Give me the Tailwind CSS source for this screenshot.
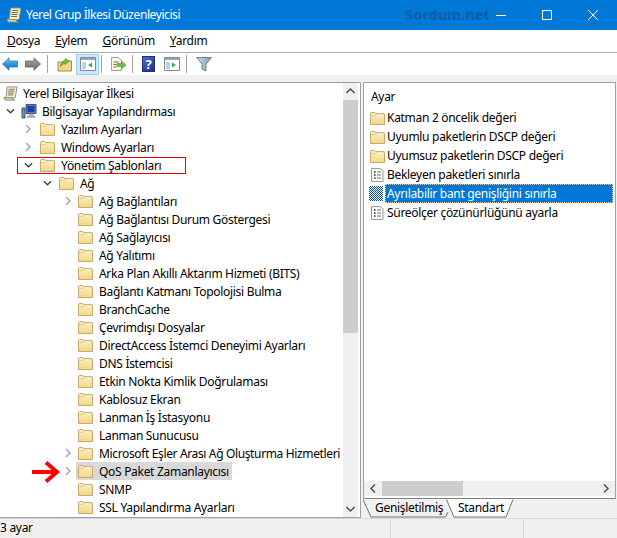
<!DOCTYPE html>
<html lang="tr">
  <head>
    <meta charset="UTF-8" />
    <title>Yerel Grup İlkesi Düzenleyicisi</title>
    <script src="https://cdn.jsdelivr.net/npm/@tailwindcss/browser@4"></script>
  </head>
  <body class="relative w-[617px] h-[538px] overflow-hidden bg-[#f0f0f0] text-[12px] leading-[18px] tracking-[-.3px] text-black font-['Noto_Sans','Open_Sans',sans-serif]">
    <svg class="absolute w-0 h-0">
      <defs>
        <linearGradient id="folder-fill" x1="0" y1="0" x2="0" y2="1">
          <stop offset="0" stop-color="#fcefc4" />
          <stop offset="1" stop-color="#f3d68a" />
        </linearGradient>
        <linearGradient id="arrow-blue" x1="0" y1="0" x2="0" y2="1">
          <stop offset="0" stop-color="#8fd0f5" />
          <stop offset=".5" stop-color="#2f95de" />
          <stop offset="1" stop-color="#1f6fb8" />
        </linearGradient>
        <linearGradient id="arrow-gray" x1="0" y1="0" x2="0" y2="1">
          <stop offset="0" stop-color="#a8a8a8" />
          <stop offset="1" stop-color="#666" />
        </linearGradient>
        <linearGradient id="funnel-fill" x1="0" y1="0" x2="1" y2="0">
          <stop offset="0" stop-color="#d3dfe6" />
          <stop offset="1" stop-color="#7f98a8" />
        </linearGradient>
      </defs>
      <symbol id="folder" viewBox="0 0 16 16">
        <path d="M1.500 14.500V3.500q0-1 1-1h3l1.500 1h7.500q1 0 1 1v10z" fill="url(#folder-fill)" stroke="#c9a966" />
        <path d="M2 5.500h5l1.500-1.500h6v1.500" fill="#fffbe8" stroke="#dcc98f" stroke-width=".8" />
      </symbol>
      <symbol id="scroll" viewBox="0 0 16 16">
        <path d="M4.500 1h10.500l-2 11.500H1.500q2-.5 2-2z" fill="#f7f1d6" stroke="#8f8a72" />
        <path d="M6 3.500h6.500M5.500 5.500h6.500M5.500 7.500h6M5 9.500h6" stroke="#6f6b58" />
        <path d="M1 12.500h9q.5 2.500 2.500 2.500H3q-2 0-2-2.500z" fill="#dfd6aa" stroke="#8f8a72" />
      </symbol>
      <symbol id="setting" viewBox="0 0 16 16">
        <path d="M2.500 1.500h9l2.500 2.500v10.500H2.500z" fill="#fbfbfb" stroke="#9a9a9a" />
        <path d="M5 5h1.500M5 8h1.500M5 11h1.500" stroke="#222" stroke-width="1.400" />
        <path d="M8 5h4M8 8h4M8 11h4" stroke="#707070" />
      </symbol>
      <symbol id="chev-right" viewBox="0 0 8 10">
        <path d="M2 1l4 4-4 4" fill="none" stroke="#a6a6a6" stroke-width="1.500" />
      </symbol>
      <symbol id="chev-down" viewBox="0 0 10 8">
        <path d="M1 2l4 4 4-4" fill="none" stroke="#404040" stroke-width="1.500" />
      </symbol>
    </svg>

    <!-- title bar -->
    <header class="h-[30px] bg-[#0078d7] flex items-center text-white pr-px">
      <svg class="w-4 h-4 ml-[6px]"><use href="#scroll" /></svg>
      <span class="ml-[4px] tracking-[-.42px]">Yerel Grup İlkesi Düzenleyicisi</span>
      <span class="ml-auto -mr-[12px] font-bold text-[14px] tracking-[.3px] text-[#0b5fa8]">Sordum.net</span>
      <div class="flex items-center w-[46px] justify-center"><div class="w-[10px] h-px bg-white"></div></div>
      <div class="flex items-center w-[46px] justify-center"><div class="w-[10px] h-[10px] border border-white"></div></div>
      <div class="flex items-center w-[46px] justify-center">
        <svg class="w-[10px] h-[10px]" viewBox="0 0 10 10"><path d="M0 0l10 10M10 0L0 10" stroke="#fff" /></svg>
      </div>
    </header>

    <!-- menu -->
    <nav class="h-[23px] bg-white border-b border-[#ababab] flex items-center pl-[7px] gap-[15px]">
      <span><u>D</u>osya</span>
      <span><u>E</u>ylem</span>
      <span><u>G</u>örünüm</span>
      <span><u>Y</u>ardım</span>
    </nav>

    <!-- toolbar -->
    <div class="h-[22px] bg-white flex items-center pl-[2px]">
      <svg class="w-4 h-[14px]" viewBox="0 0 16 14"><path d="M.5 7L7 .8v3.200h8.500v6H7v3.200z" fill="url(#arrow-blue)" stroke="#2a78bd" stroke-width=".8" /></svg>
      <svg class="w-4 h-[14px] ml-[7px]" viewBox="0 0 16 14"><path d="M15.500 7L9 .8v3.200H.5v6H9v3.200z" fill="url(#arrow-gray)" stroke="#666" stroke-width=".8" /></svg>
      <div class="w-px h-[18px] bg-[#a0a0a0] ml-[6px]"></div>
      <svg class="w-4 h-4 ml-[9px]" viewBox="0 0 16 16">
        <path d="M1 15V6h4l1-1h8.500v10z" fill="#f0d68c" stroke="#a98a3c" />
        <path d="M3 11q1-5 5-6V2.500L12.500 5 8 8.500V7q-3 1-5 4z" fill="#7cc02c" stroke="#4f8c1c" stroke-width=".6" />
      </svg>
      <div class="w-[23px] h-[21px] ml-[3px] bg-[#cce8ff] border border-[#99d1ff] flex items-center justify-center">
        <svg class="w-4 h-[14px]" viewBox="0 0 16 14">
          <path d="M.5.500h15v13H.5z" fill="#fff" stroke="#7d8a96" />
          <path d="M1 1h14v2H1z" fill="#9aa7b3" />
          <path d="M2 5h4v7H2z" fill="#b9d3e6" />
          <path d="M12 5.500v5L8 8z" fill="#3aa655" />
        </svg>
      </div>
      <div class="w-px h-[18px] bg-[#a0a0a0] ml-[2px]"></div>
      <svg class="w-4 h-4 ml-[8px]" viewBox="0 0 16 16">
        <path d="M1.500 1.500h7l3 3v10h-10z" fill="#fdf8e8" stroke="#a8a490" />
        <path d="M3.500 6h5M3.500 8.500h3M3.500 11h3" stroke="#666" />
        <path d="M7 7.500h4.500V5L16 9l-4.500 4v-2.500H7z" fill="#6cc04a" stroke="#4a9a30" stroke-width=".6" />
      </svg>
      <div class="w-px h-[18px] bg-[#a0a0a0] ml-[6px]"></div>
      <div class="w-[13px] h-[16px] ml-[9px] bg-[linear-gradient(135deg,#4a6fd0,#1c2f8a)] border border-[#1c2f7a] text-white font-bold text-[13px] leading-[14px] text-center">?</div>
      <svg class="w-4 h-[14px] ml-[9px]" viewBox="0 0 16 14">
        <path d="M.5.500h15v13H.5z" fill="#fff" stroke="#7d8a96" />
        <path d="M1 1h14v2H1z" fill="#9aa7b3" />
        <path d="M2 5h4v7H2z" fill="#b9d3e6" />
        <path d="M8 5.500v5L12 8z" fill="#3aa655" />
      </svg>
      <div class="w-px h-[18px] bg-[#a0a0a0] ml-[6px]"></div>
      <svg class="w-4 h-4 ml-[9px]" viewBox="0 0 16 16">
        <path d="M.5 1.500h15L10 8v7l-4-2V8z" fill="url(#funnel-fill)" stroke="#6e8494" />
      </svg>
    </div>

    <!-- panes -->
    <main class="h-[443px] pt-[7px] flex gap-[2px] pr-px">
      <!-- tree -->
      <section class="w-[361px] h-[436px] bg-white border border-l-0 border-[#a0a0a0] flex overflow-hidden pr-[2px]">
        <div class="flex-1 pt-px overflow-hidden whitespace-nowrap">
          <div class="h-[18px] flex items-center pl-[3px]"><svg class="w-[15px] h-[15px] shrink-0"><use href="#scroll" /></svg><span class="ml-[5px] pt-[2px]">Yerel Bilgisayar İlkesi</span></div>
          <div class="h-[18px] flex items-center pl-[6px]">
            <svg class="w-[9px] h-2 shrink-0"><use href="#chev-down" /></svg>
            <svg class="w-4 h-4 ml-[6px] shrink-0" viewBox="0 0 16 16">
              <path d="M5 1.500h10v9H5z" fill="#3f7fd6" stroke="#555" />
              <path d="M6.500 3h7v6h-7z" fill="#1f3fa8" />
              <path d="M8 11h4v2H8zM6 13h8v1.500H6z" fill="#c8ccd2" stroke="#888" stroke-width=".5" />
              <path d="M1 5h3v10H1z" fill="#6e8fb5" stroke="#3f5878" />
            </svg>
            <span class="ml-[5px] pt-[2px]">Bilgisayar Yapılandırması</span>
          </div>
          <div class="h-[18px] flex items-center pl-[24px]"><svg class="w-2 h-[10px] shrink-0"><use href="#chev-right" /></svg><svg class="w-4 h-4 ml-[7px] shrink-0"><use href="#folder" /></svg><span class="ml-[6px] pt-[2px]">Yazılım Ayarları</span></div>
          <div class="h-[18px] flex items-center pl-[24px]"><svg class="w-2 h-[10px] shrink-0"><use href="#chev-right" /></svg><svg class="w-4 h-4 ml-[7px] shrink-0"><use href="#folder" /></svg><span class="ml-[6px] pt-[2px]">Windows Ayarları</span></div>
          <div class="h-[18px] flex items-center pl-[24px]"><svg class="w-[9px] h-2 shrink-0"><use href="#chev-down" /></svg><svg class="w-4 h-4 ml-[6px] shrink-0"><use href="#folder" /></svg><span class="ml-[6px] pt-[2px]">Yönetim Şablonları</span></div>
          <div class="h-[18px] flex items-center pl-[43px]"><svg class="w-[9px] h-2 shrink-0"><use href="#chev-down" /></svg><svg class="w-4 h-4 ml-[6px] shrink-0"><use href="#folder" /></svg><span class="ml-[6px] pt-[2px]">Ağ</span></div>
          <div class="h-[18px] flex items-center pl-[64px]"><svg class="w-2 h-[10px] shrink-0"><use href="#chev-right" /></svg><svg class="w-4 h-4 ml-[5px] shrink-0"><use href="#folder" /></svg><span class="ml-[6px] pt-[2px]">Ağ Bağlantıları</span></div>
          <div class="h-[18px] flex items-center pl-[77px]"><svg class="w-4 h-4 shrink-0"><use href="#folder" /></svg><span class="ml-[6px] pt-[2px]">Ağ Bağlantısı Durum Göstergesi</span></div>
          <div class="h-[18px] flex items-center pl-[77px]"><svg class="w-4 h-4 shrink-0"><use href="#folder" /></svg><span class="ml-[6px] pt-[2px]">Ağ Sağlayıcısı</span></div>
          <div class="h-[18px] flex items-center pl-[77px]"><svg class="w-4 h-4 shrink-0"><use href="#folder" /></svg><span class="ml-[6px] pt-[2px]">Ağ Yalıtımı</span></div>
          <div class="h-[18px] flex items-center pl-[77px]"><svg class="w-4 h-4 shrink-0"><use href="#folder" /></svg><span class="ml-[6px] pt-[2px]">Arka Plan Akıllı Aktarım Hizmeti (BITS)</span></div>
          <div class="h-[18px] flex items-center pl-[77px]"><svg class="w-4 h-4 shrink-0"><use href="#folder" /></svg><span class="ml-[6px] pt-[2px]">Bağlantı Katmanı Topolojisi Bulma</span></div>
          <div class="h-[18px] flex items-center pl-[77px]"><svg class="w-4 h-4 shrink-0"><use href="#folder" /></svg><span class="ml-[6px] pt-[2px]">BranchCache</span></div>
          <div class="h-[18px] flex items-center pl-[77px]"><svg class="w-4 h-4 shrink-0"><use href="#folder" /></svg><span class="ml-[6px] pt-[2px]">Çevrimdışı Dosyalar</span></div>
          <div class="h-[18px] flex items-center pl-[77px]"><svg class="w-4 h-4 shrink-0"><use href="#folder" /></svg><span class="ml-[6px] pt-[2px]">DirectAccess İstemci Deneyimi Ayarları</span></div>
          <div class="h-[18px] flex items-center pl-[77px]"><svg class="w-4 h-4 shrink-0"><use href="#folder" /></svg><span class="ml-[6px] pt-[2px]">DNS İstemcisi</span></div>
          <div class="h-[18px] flex items-center pl-[77px]"><svg class="w-4 h-4 shrink-0"><use href="#folder" /></svg><span class="ml-[6px] pt-[2px]">Etkin Nokta Kimlik Doğrulaması</span></div>
          <div class="h-[18px] flex items-center pl-[77px]"><svg class="w-4 h-4 shrink-0"><use href="#folder" /></svg><span class="ml-[6px] pt-[2px]">Kablosuz Ekran</span></div>
          <div class="h-[18px] flex items-center pl-[77px]"><svg class="w-4 h-4 shrink-0"><use href="#folder" /></svg><span class="ml-[6px] pt-[2px]">Lanman İş İstasyonu</span></div>
          <div class="h-[18px] flex items-center pl-[77px]"><svg class="w-4 h-4 shrink-0"><use href="#folder" /></svg><span class="ml-[6px] pt-[2px]">Lanman Sunucusu</span></div>
          <div class="h-[18px] flex items-center pl-[64px]"><svg class="w-2 h-[10px] shrink-0"><use href="#chev-right" /></svg><svg class="w-4 h-4 ml-[5px] shrink-0"><use href="#folder" /></svg><span class="ml-[6px] pt-[2px] tracking-[-.36px]">Microsoft Eşler Arası Ağ Oluşturma Hizmetleri</span></div>
          <div class="h-[18px] flex items-center pl-[64px]"><svg class="w-2 h-[10px] shrink-0"><use href="#chev-right" /></svg>
            <div class="ml-[4px] h-[18px] w-[156px] bg-[#d9d9d9] flex items-center pl-px"><svg class="w-4 h-4 shrink-0"><use href="#folder" /></svg><span class="ml-[6px] pt-[2px]">QoS Paket Zamanlayıcısı</span></div>
          </div>
          <div class="h-[18px] flex items-center pl-[77px]"><svg class="w-4 h-4 shrink-0"><use href="#folder" /></svg><span class="ml-[6px] pt-[2px]">SNMP</span></div>
          <div class="h-[18px] flex items-center pl-[77px]"><svg class="w-4 h-4 shrink-0"><use href="#folder" /></svg><span class="ml-[6px] pt-[2px]">SSL Yapılandırma Ayarları</span></div>
        </div>
        <!-- vertical scrollbar -->
        <div class="w-[15px] bg-[#f0f0f0] flex flex-col items-center">
          <svg class="w-[15px] h-[17px] shrink-0" viewBox="0 0 15 17"><path d="M3.500 10l4-4 4 4" fill="none" stroke="#505050" stroke-width="1.500" /></svg>
          <div class="w-[15px] h-[233px] bg-[#cdcdcd]"></div>
          <svg class="w-[15px] h-[17px] mt-auto shrink-0" viewBox="0 0 15 17"><path d="M3.500 7l4 4 4-4" fill="none" stroke="#505050" stroke-width="1.500" /></svg>
        </div>
      </section>

      <!-- settings -->
      <section class="flex-1 flex flex-col h-[436px]">
        <div class="h-[417px] bg-white border border-[#a0a0a0] border-b-[#808080] flex flex-col">
          <div class="flex-1 pt-[5px] pl-[5px] pr-[2px] whitespace-nowrap">
            <div class="h-[19px] pl-[2px] mb-px">Ayar</div>
            <div class="h-[19px] flex items-center"><svg class="w-4 h-4 shrink-0"><use href="#folder" /></svg><span class="ml-[2px]">Katman 2 öncelik değeri</span></div>
            <div class="h-[19px] flex items-center"><svg class="w-4 h-4 shrink-0"><use href="#folder" /></svg><span class="ml-[2px]">Uyumlu paketlerin DSCP değeri</span></div>
            <div class="h-[19px] flex items-center"><svg class="w-4 h-4 shrink-0"><use href="#folder" /></svg><span class="ml-[2px]">Uyumsuz paketlerin DSCP değeri</span></div>
            <div class="h-[19px] flex items-center"><svg class="w-4 h-4 shrink-0"><use href="#setting" /></svg><span class="ml-[2px]">Bekleyen paketleri sınırla</span></div>
            <div class="h-[19px] flex items-center">
              <svg class="w-[14px] h-[15px] shrink-0" viewBox="0 0 14 15">
                <defs>
                  <pattern id="hatch" width="2" height="2" patternUnits="userSpaceOnUse">
                    <rect width="2" height="2" fill="#0a4fa8" />
                    <rect width="1" height="1" fill="#eef5ff" />
                    <rect x="1" y="1" width="1" height="1" fill="#eef5ff" />
                  </pattern>
                </defs>
                <rect width="14" height="15" fill="url(#hatch)" />
              </svg>
              <span class="ml-[2px] pl-[2px] flex-1 h-[19px] flex items-center bg-[#0078d7] text-white outline-1 outline-dotted -outline-offset-1 outline-[#f5c58a]">Ayrılabilir bant genişliğini sınırla</span>
            </div>
            <div class="h-[19px] flex items-center"><svg class="w-4 h-4 shrink-0"><use href="#setting" /></svg><span class="ml-[2px]">Süreölçer çözünürlüğünü ayarla</span></div>
          </div>
          <!-- horizontal scrollbar -->
          <div class="h-[15px] mb-[2px] bg-[#f0f0f0] flex items-center">
            <svg class="w-[18px] h-[15px] shrink-0" viewBox="0 0 18 15"><path d="M11 3.500l-4 4 4 4" fill="none" stroke="#505050" stroke-width="1.500" /></svg>
            <div class="w-[81px] h-[15px] bg-[#cdcdcd]"></div>
            <svg class="w-[18px] h-[15px] ml-auto shrink-0" viewBox="0 0 18 15"><path d="M7 3.500l4 4-4 4" fill="none" stroke="#505050" stroke-width="1.500" /></svg>
          </div>
        </div>
        <!-- tabs -->
        <div class="relative h-[19px] flex pl-[12px]">
          <svg class="absolute left-0 top-0 w-[252px] h-[19px]" viewBox="0 0 252 19">
            <path d="M83.500 .5L91 18h52L150 .5z" fill="#fff" />
            <path d="M0 .5L8 18h74.500L85 13M83.500 .5L91 18h52L150 .5" fill="none" stroke="#707070" />
          </svg>
          <span class="relative w-[83px]">Genişletilmiş</span>
          <span class="relative">Standart</span>
        </div>
      </section>
    </main>

    <!-- status bar -->
    <footer class="h-[20px] flex border-t border-[#d8d8d8]">
      <div class="w-[395px] -ml-[4px] pl-[4px] border-r border-[#d4d4d4]">3 ayar</div>
      <div class="w-[133px] border-r border-[#d4d4d4]"></div>
    </footer>

    <!-- annotations -->
    <svg class="absolute left-[17px] top-[157px] w-[169px] h-[17px]" viewBox="0 0 169 17">
      <rect x=".5" y=".5" width="168" height="16" fill="none" stroke="#e60000" />
    </svg>
    <svg class="absolute left-[32px] top-[461px] w-[28px] h-[22px]" viewBox="0 0 28 22">
      <path d="M0 11h25M14 1.500L25 11 14 20.500" fill="none" stroke="#f00" stroke-width="4" />
    </svg>
  </body>
</html>
